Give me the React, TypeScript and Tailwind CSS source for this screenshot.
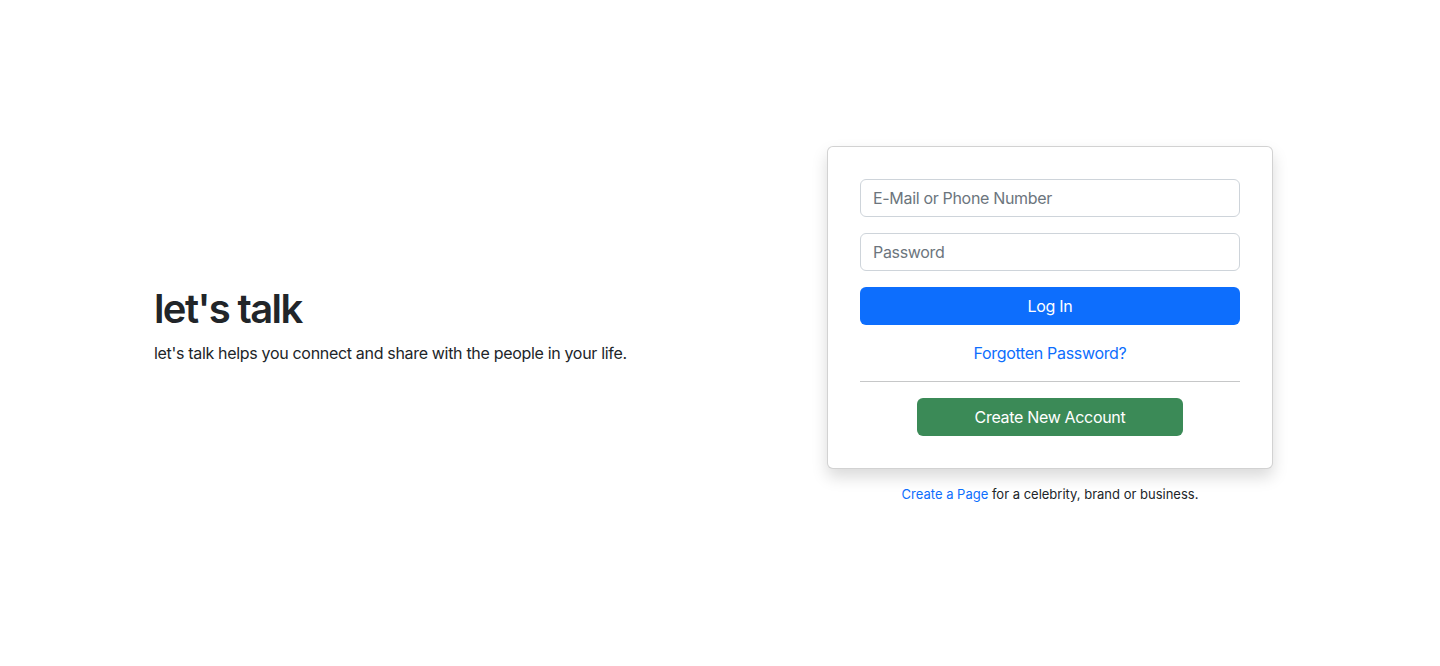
export default function App() {
  return (
    <div
      className="h-[666px] w-full bg-white flex items-center pb-[16px] text-[#212529] tracking-[-0.02em]"
      style={{ fontFamily: "Inter, 'Noto Sans', sans-serif" }}
    >
      <div className="flex-1 pl-[154px]">
        <h1 className="text-[40px] leading-[48px] font-semibold tracking-[-0.04em] mb-2">let's talk</h1>
        <p className="text-base leading-6">
          let's talk helps you connect and share with the people in your life.
        </p>
      </div>

      <div className="w-[446px] mr-[167px] flex flex-col items-center">
        <form className="w-full bg-white border border-black/[0.175] rounded-md shadow-[0_8px_16px_rgba(0,0,0,0.15)] p-8">
          <input
            type="text"
            placeholder="E-Mail or Phone Number"
            className="block w-full h-[38px] px-3 border border-[#ced4da] rounded-md text-base tracking-[-0.02em] placeholder:text-[#6c757d] outline-none"
          />
          <input
            type="password"
            placeholder="Password"
            className="block w-full h-[38px] px-3 mt-4 border border-[#ced4da] rounded-md text-base tracking-[-0.02em] placeholder:text-[#6c757d] outline-none"
          />
          <button
            type="button"
            className="block w-full h-[38px] mt-4 bg-[#0d6efd] text-white text-base tracking-[-0.02em] rounded-md"
          >
            Log In
          </button>
          <div className="mt-4 text-center leading-6">
            <a href="#" className="text-[#0d6efd]">
              Forgotten Password?
            </a>
          </div>
          <hr className="my-4 border-t border-[#c6c7c8]" />
          <div className="flex justify-center">
            <button
              type="button"
              className="w-[70%] h-[38px] bg-[#3b8a57] text-white text-base tracking-[-0.02em] rounded-md"
            >
              Create New Account
            </button>
          </div>
        </form>
        <p className="mt-[15px] text-[13px] leading-[21px] tracking-normal">
          <a href="#" className="text-[#0d6efd]">
            Create a Page
          </a>{" "}
          for a celebrity, brand or business.
        </p>
      </div>
    </div>
  );
}
